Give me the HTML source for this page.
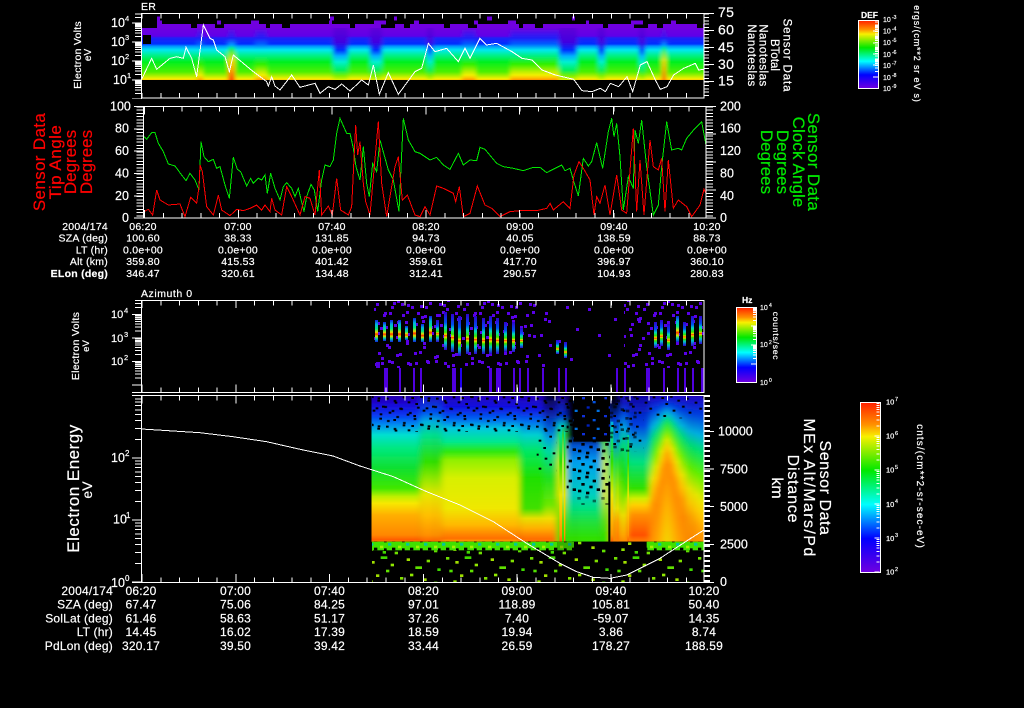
<!DOCTYPE html>
<html><head><meta charset="utf-8"><title>Sensor Data</title>
<style>
html,body{margin:0;padding:0;background:#000;width:1024px;height:708px;overflow:hidden}
svg{display:block}
text{font-family:"Liberation Sans",sans-serif;fill:#fff;stroke:#fff;stroke-width:.2}
.a{font-size:12.5px}.s{font-size:7.5px}.r{font-size:10.5px;text-anchor:middle;letter-spacing:.25px}
.l{font-size:10.5px;text-anchor:end;letter-spacing:.25px}
.R{font-size:12px;text-anchor:middle;letter-spacing:.2px}.L{font-size:12px;text-anchor:end;letter-spacing:.2px}
.m{text-anchor:middle}
.crisp{shape-rendering:crispEdges}
.rd{fill:#f00;stroke:#f00}.gr{fill:#00e800;stroke:#00e800}
</style></head><body>
<svg width="1024" height="708" viewBox="0 0 1024 708" xmlns="http://www.w3.org/2000/svg">
<defs>
<filter id="b6" x="-5%" y="0" width="110%" height="100%"><feGaussianBlur stdDeviation="9 0"/></filter>
<filter id="b1" x="-5%" y="0" width="110%" height="100%"><feGaussianBlur stdDeviation="2.2 0"/></filter>
<clipPath id="c4"><rect x="36" y="0" width="996" height="561"/></clipPath>
<clipPath id="c1"><rect x="142" y="14" width="562" height="84"/></clipPath>
<clipPath id="cl1"><rect x="125" y="13" width="20" height="86"/></clipPath>
<clipPath id="cl3"><rect x="125" y="300" width="20" height="92.5"/></clipPath>
<clipPath id="cl4"><rect x="125" y="395" width="20" height="188"/></clipPath>
<clipPath id="cb1"><rect x="858" y="20" width="21" height="69"/></clipPath>
<clipPath id="cd3"><rect x="374" y="301" width="330" height="67"/></clipPath>

<path id="d19" d="M0-5.7H7M0-9.1H7M0-11.4H7M0-13.3H7M0-14.8H7M0-16.1H7M0-17.2H7M0-18.1H7M-3 0H7" stroke="#fff" fill="none"/>
<path id="d23" d="M0-7.1H7M0-11.2H7M0-14.1H7M0-16.4H7M0-18.3H7M0-19.9H7M0-21.2H7M0-22.4H7M-3 0H7" stroke="#fff" fill="none"/>
<path id="d62" d="M0-18.7H7M0-29.6H7M0-37.3H7M0-43.3H7M0-48.2H7M0-52.4H7M0-56H7M0-59.2H7M-3 0H7" stroke="#fff" fill="none"/>
<path id="b34" d="M0-10.2H3M0-16.2H3M0-20.5H3M0-23.8H3M0-26.5H3M0-28.7H3M0-30.7H3M0-32.4H3M-2 0H3" stroke="#fff" fill="none"/>
<path id="b19" d="M0-5.7H3M0-9.1H3M0-11.4H3M0-13.3H3M0-14.8H3M0-16.1H3M0-17.2H3M0-18.1H3M-2 0H3" stroke="#fff" fill="none"/>

<linearGradient id="cb" x1="0" y1="0" x2="0" y2="1">
<stop offset="0" stop-color="#ff2000"/><stop offset=".13" stop-color="#ff9000"/><stop offset=".2" stop-color="#f8f000"/><stop offset=".4" stop-color="#00e800"/><stop offset=".6" stop-color="#00ffff"/><stop offset=".8" stop-color="#0000ff"/><stop offset="1" stop-color="#7000e0"/></linearGradient>

<linearGradient id="g1" gradientUnits="userSpaceOnUse" x1="0" y1="0" x2="0" y2="1000"><stop offset="0" stop-color="#2800a8"/><stop offset=".03" stop-color="#1808d8"/><stop offset=".06" stop-color="#0838f0"/><stop offset=".09" stop-color="#0090f0"/><stop offset=".12" stop-color="#00e0d0"/><stop offset=".16" stop-color="#00e880"/><stop offset=".22" stop-color="#10e030"/><stop offset=".28" stop-color="#40e800"/><stop offset=".305" stop-color="#c0f000"/><stop offset=".325" stop-color="#f8e800"/><stop offset=".36" stop-color="#ffb000"/><stop offset=".42" stop-color="#ff8800"/><stop offset=".435" stop-color="#ff5a00"/><stop offset=".44" stop-color="#ff9000"/></linearGradient>
<linearGradient id="g2" gradientUnits="userSpaceOnUse" x1="0" y1="0" x2="0" y2="1000"><stop offset="0" stop-color="#2010c0"/><stop offset=".05" stop-color="#0050f0"/><stop offset=".08" stop-color="#00b0e0"/><stop offset=".12" stop-color="#00e090"/><stop offset=".2" stop-color="#30e000"/><stop offset=".25" stop-color="#90e800"/><stop offset=".3" stop-color="#e8e800"/><stop offset=".36" stop-color="#ffc000"/><stop offset=".42" stop-color="#ff9000"/><stop offset=".44" stop-color="#ff6000"/></linearGradient>
<linearGradient id="g3" gradientUnits="userSpaceOnUse" x1="0" y1="0" x2="0" y2="1000"><stop offset="0" stop-color="#2800b8"/><stop offset=".035" stop-color="#1010e0"/><stop offset=".07" stop-color="#0060f0"/><stop offset=".1" stop-color="#00c8e0"/><stop offset=".14" stop-color="#00e890"/><stop offset=".17" stop-color="#30e810"/><stop offset=".195" stop-color="#90f000"/><stop offset=".25" stop-color="#d8f000"/><stop offset=".34" stop-color="#f0e800"/><stop offset=".39" stop-color="#ffb800"/><stop offset=".43" stop-color="#ff7000"/><stop offset=".44" stop-color="#ffa000"/></linearGradient>
<linearGradient id="g4" gradientUnits="userSpaceOnUse" x1="0" y1="0" x2="0" y2="1000"><stop offset="0" stop-color="#2800b8"/><stop offset=".04" stop-color="#1010e0"/><stop offset=".08" stop-color="#0070f0"/><stop offset=".12" stop-color="#00d0d0"/><stop offset=".17" stop-color="#00e860"/><stop offset=".25" stop-color="#20e000"/><stop offset=".34" stop-color="#40e000"/><stop offset=".37" stop-color="#e8e000"/><stop offset=".4" stop-color="#ffb000"/><stop offset=".43" stop-color="#ff7000"/></linearGradient>
<linearGradient id="g5" gradientUnits="userSpaceOnUse" x1="0" y1="0" x2="0" y2="1000"><stop offset="0" stop-color="#000030"/><stop offset=".04" stop-color="#101090"/><stop offset=".09" stop-color="#0050d0"/><stop offset=".13" stop-color="#00a0e0"/><stop offset=".17" stop-color="#00d8a0"/><stop offset=".25" stop-color="#20e020"/><stop offset=".33" stop-color="#70e800"/><stop offset=".37" stop-color="#f0e000"/><stop offset=".4" stop-color="#ffb000"/><stop offset=".43" stop-color="#ff7000"/></linearGradient>
<linearGradient id="g6" gradientUnits="userSpaceOnUse" x1="0" y1="0" x2="0" y2="1000"><stop offset="0" stop-color="#200090"/><stop offset=".06" stop-color="#0030d0"/><stop offset=".09" stop-color="#00c0c0"/><stop offset=".12" stop-color="#30e040"/><stop offset=".2" stop-color="#c0f000"/><stop offset=".3" stop-color="#e0e800"/><stop offset=".38" stop-color="#60e000"/><stop offset=".43" stop-color="#30e000"/></linearGradient>
<linearGradient id="g7" gradientUnits="userSpaceOnUse" x1="0" y1="0" x2="0" y2="1000"><stop offset="0" stop-color="#000"/><stop offset=".12" stop-color="#000018"/><stop offset=".15" stop-color="#0050d0"/><stop offset=".2" stop-color="#00a0f0"/><stop offset=".3" stop-color="#00d0c0"/><stop offset=".34" stop-color="#00e080"/><stop offset=".38" stop-color="#20e040"/><stop offset=".43" stop-color="#30e000"/></linearGradient>
<linearGradient id="g8" gradientUnits="userSpaceOnUse" x1="0" y1="0" x2="0" y2="1000"><stop offset=".02" stop-color="#000"/><stop offset=".07" stop-color="#0030d0"/><stop offset=".14" stop-color="#00a0d0"/><stop offset=".2" stop-color="#20e040"/><stop offset=".28" stop-color="#a0e800"/><stop offset=".34" stop-color="#e8e000"/><stop offset=".38" stop-color="#ffa000"/><stop offset=".43" stop-color="#ff8000"/></linearGradient>
<linearGradient id="g9" gradientUnits="userSpaceOnUse" x1="0" y1="0" x2="0" y2="1000"><stop offset="0" stop-color="#1000a0"/><stop offset=".09" stop-color="#0040e0"/><stop offset=".14" stop-color="#00a0d0"/><stop offset=".2" stop-color="#00e080"/><stop offset=".28" stop-color="#30e000"/><stop offset=".31" stop-color="#d0f000"/><stop offset=".33" stop-color="#ffd000"/><stop offset=".36" stop-color="#ff9000"/><stop offset=".42" stop-color="#ff5000"/><stop offset=".44" stop-color="#ff8000"/></linearGradient>
<linearGradient id="g11" gradientUnits="userSpaceOnUse" x1="0" y1="0" x2="0" y2="1000"><stop offset="0" stop-color="#2000c0"/><stop offset=".05" stop-color="#0040e0"/><stop offset=".1" stop-color="#00b0e0"/><stop offset=".14" stop-color="#00e070"/><stop offset=".2" stop-color="#60f000"/><stop offset=".26" stop-color="#e8e800"/><stop offset=".3" stop-color="#ffc800"/><stop offset=".34" stop-color="#ff9c00"/><stop offset=".4" stop-color="#ff8800"/><stop offset=".5" stop-color="#ff9c00"/><stop offset=".65" stop-color="#ffb800"/><stop offset=".85" stop-color="#f0d800"/></linearGradient>
<linearGradient id="g12" gradientUnits="userSpaceOnUse" x1="0" y1="0" x2="0" y2="1000"><stop offset="0" stop-color="#2000b8"/><stop offset=".05" stop-color="#0040e0"/><stop offset=".1" stop-color="#00b0e0"/><stop offset=".15" stop-color="#00e070"/><stop offset=".24" stop-color="#20e000"/><stop offset=".3" stop-color="#70e800"/><stop offset=".36" stop-color="#e8e800"/><stop offset=".42" stop-color="#ffb000"/><stop offset=".44" stop-color="#ff9000"/></linearGradient>

<pattern id="sp" patternUnits="userSpaceOnUse" width="150" height="84"><g fill="#000"><rect x="4" y="6" width="8" height="6"/><rect x="30" y="2" width="8" height="6"/><rect x="52" y="14" width="8" height="6"/><rect x="78" y="8" width="8" height="6"/><rect x="16" y="24" width="8" height="6"/><rect x="66" y="32" width="8" height="6"/><rect x="38" y="44" width="8" height="6"/><rect x="86" y="50" width="8" height="6"/><rect x="10" y="60" width="8" height="6"/><rect x="58" y="68" width="8" height="6"/><rect x="104" y="20" width="8" height="6"/><rect x="128" y="4" width="8" height="6"/><rect x="118" y="38" width="8" height="6"/><rect x="140" y="56" width="8" height="6"/><rect x="100" y="72" width="8" height="6"/></g></pattern>
<pattern id="sd" patternUnits="userSpaceOnUse" width="72" height="60"><g fill="#000"><rect x="4" y="6" width="10" height="8"/><rect x="28" y="2" width="10" height="8"/><rect x="50" y="14" width="10" height="8"/><rect x="16" y="24" width="10" height="8"/><rect x="40" y="32" width="10" height="8"/><rect x="62" y="40" width="10" height="8"/><rect x="6" y="44" width="10" height="8"/><rect x="30" y="50" width="10" height="8"/></g></pattern>
<pattern id="bd" patternUnits="userSpaceOnUse" width="66" height="54"><rect x="6" y="6" width="9" height="7" fill="#1030d8"/><rect x="38" y="18" width="9" height="7" fill="#0050e0"/><rect x="20" y="34" width="9" height="7" fill="#0020c0"/><rect x="50" y="44" width="9" height="7" fill="#0070e0"/></pattern>
<pattern id="gn" patternUnits="userSpaceOnUse" width="252" height="96"><rect x="6" y="6" width="10" height="8" fill="#70e000"/><rect x="34" y="18" width="10" height="8" fill="#a0e000"/><rect x="62" y="4" width="20" height="8" fill="#40d800"/><rect x="92" y="26" width="10" height="8" fill="#90e800"/><rect x="16" y="44" width="10" height="8" fill="#50e000"/><rect x="48" y="58" width="10" height="8" fill="#a0e000"/><rect x="78" y="44" width="10" height="8" fill="#60e000"/><rect x="120" y="66" width="10" height="8" fill="#80e000"/><rect x="28" y="76" width="10" height="8" fill="#90e000"/><rect x="68" y="84" width="10" height="8" fill="#40d800"/><rect x="104" y="86" width="10" height="8" fill="#70e000"/><rect x="140" y="10" width="10" height="8" fill="#a0e000"/><rect x="166" y="34" width="20" height="8" fill="#60e000"/><rect x="200" y="14" width="10" height="8" fill="#80e000"/><rect x="232" y="40" width="10" height="8" fill="#40d800"/><rect x="150" y="56" width="10" height="8" fill="#90e800"/><rect x="190" y="70" width="10" height="8" fill="#a0e000"/><rect x="222" y="80" width="10" height="8" fill="#60e000"/></pattern>
<pattern id="gb" patternUnits="userSpaceOnUse" width="54" height="26"><rect width="54" height="26" fill="#40e000"/><rect x="6" y="10" width="10" height="8" fill="#a0f000"/><rect x="30" y="2" width="10" height="8" fill="#00c8a0"/><rect x="42" y="16" width="10" height="8" fill="#000"/><rect x="18" y="18" width="8" height="8" fill="#000"/></pattern>

<pattern id="pd" patternUnits="userSpaceOnUse" x="374" y="300" width="90" height="66"><g fill="#5a00e8"><rect x="2" y="3" width="3" height="3"/><rect x="19" y="2" width="3" height="3"/><rect x="37" y="6" width="3" height="3"/><rect x="55" y="2" width="3" height="3"/><rect x="72" y="8" width="3" height="3"/><rect x="10" y="12" width="3" height="3"/><rect x="28" y="14" width="3" height="3"/><rect x="47" y="16" width="3" height="3"/><rect x="64" y="14" width="3" height="3"/><rect x="83" y="18" width="3" height="3"/><rect x="3" y="22" width="3" height="3"/><rect x="20" y="24" width="3" height="3"/><rect x="56" y="26" width="3" height="3"/><rect x="75" y="28" width="3" height="3"/><rect x="12" y="44" width="3" height="3"/><rect x="32" y="42" width="3" height="3"/><rect x="49" y="46" width="3" height="3"/><rect x="68" y="44" width="3" height="3"/><rect x="84" y="48" width="3" height="3"/><rect x="4" y="52" width="3" height="3"/><rect x="22" y="54" width="3" height="3"/><rect x="40" y="52" width="3" height="3"/><rect x="60" y="56" width="3" height="3"/><rect x="78" y="54" width="3" height="3"/><rect x="14" y="60" width="3" height="3"/><rect x="33" y="62" width="3" height="3"/><rect x="52" y="60" width="3" height="3"/><rect x="70" y="62" width="3" height="3"/></g></pattern>
<pattern id="ps" patternUnits="userSpaceOnUse" x="374" y="300" width="70" height="66"><g fill="#5a00e8"><rect x="4" y="8" width="3" height="3"/><rect x="30" y="18" width="3" height="3"/><rect x="52" y="6" width="3" height="3"/><rect x="14" y="34" width="3" height="3"/><rect x="44" y="40" width="3" height="3"/><rect x="62" y="28" width="3" height="3"/><rect x="24" y="54" width="3" height="3"/><rect x="56" y="58" width="3" height="3"/></g></pattern>
<linearGradient id="h1" x1="0" y1="0" x2="0" y2="1"><stop offset="0" stop-color="#3000d0"/><stop offset=".28" stop-color="#0050f0"/><stop offset=".4" stop-color="#00d8c0"/><stop offset=".53" stop-color="#30e800"/><stop offset=".59" stop-color="#e8e000"/><stop offset=".62" stop-color="#ff3000"/><stop offset=".66" stop-color="#e8e000"/><stop offset=".72" stop-color="#30e000"/><stop offset=".82" stop-color="#00c0d0"/><stop offset="1" stop-color="#3000d0"/></linearGradient>
<linearGradient id="h2" x1="0" y1="0" x2="0" y2="1"><stop offset="0" stop-color="#1020e0"/><stop offset=".2" stop-color="#00b0e0"/><stop offset=".4" stop-color="#00e880"/><stop offset=".56" stop-color="#e0e000"/><stop offset=".64" stop-color="#ff3000"/><stop offset=".74" stop-color="#d0e800"/><stop offset=".85" stop-color="#00d0b0"/><stop offset="1" stop-color="#1020e0"/></linearGradient>

<linearGradient id="p1" gradientUnits="userSpaceOnUse" x1="0" y1="0" x2="0" y2="100"><stop offset=".28" stop-color="#7000e0"/><stop offset=".36" stop-color="#6000e8"/><stop offset=".38" stop-color="#2020f8"/><stop offset=".44" stop-color="#0030ff"/><stop offset=".46" stop-color="#0090ff"/><stop offset=".5" stop-color="#00e8f0"/><stop offset=".55" stop-color="#00f090"/><stop offset=".62" stop-color="#00f020"/><stop offset=".72" stop-color="#50f000"/><stop offset=".76" stop-color="#b0f000"/><stop offset=".785" stop-color="#f0f000"/><stop offset=".8" stop-color="#ffd000"/></linearGradient>
<linearGradient id="p2" gradientUnits="userSpaceOnUse" x1="0" y1="0" x2="0" y2="100"><stop offset=".28" stop-color="#6000d8"/><stop offset=".42" stop-color="#4000e0"/><stop offset=".5" stop-color="#0030ff"/><stop offset=".56" stop-color="#00b0ff"/><stop offset=".62" stop-color="#00f0d0"/><stop offset=".7" stop-color="#00f060"/><stop offset=".76" stop-color="#80f000"/><stop offset=".8" stop-color="#e0f000"/></linearGradient>
<linearGradient id="p3" gradientUnits="userSpaceOnUse" x1="0" y1="0" x2="0" y2="100"><stop offset=".28" stop-color="#7000e0"/><stop offset=".38" stop-color="#2020f8"/><stop offset=".45" stop-color="#00a0ff"/><stop offset=".48" stop-color="#00f090"/><stop offset=".52" stop-color="#60f000"/><stop offset=".6" stop-color="#f0e000"/><stop offset=".7" stop-color="#ffa000"/><stop offset=".76" stop-color="#ff6000"/><stop offset=".8" stop-color="#ff3000"/></linearGradient>
<linearGradient id="p4" gradientUnits="userSpaceOnUse" x1="0" y1="0" x2="0" y2="100"><stop offset=".28" stop-color="#7000e0"/><stop offset=".38" stop-color="#2020f8"/><stop offset=".44" stop-color="#0060ff"/><stop offset=".5" stop-color="#00e8f0"/><stop offset=".56" stop-color="#00f080"/><stop offset=".64" stop-color="#30f000"/><stop offset=".71" stop-color="#b0f000"/><stop offset=".75" stop-color="#f0f000"/><stop offset=".78" stop-color="#ffc000"/><stop offset=".8" stop-color="#ff9000"/></linearGradient>
</defs>
<rect width="1024" height="708" fill="#000"/>

<!-- PANEL 1 spectrogram -->
<g clip-path="url(#c1)">
<g filter="url(#b1)">
<rect x="130" y="28" width="585" height="52" fill="url(#p1)"/>
<rect x="197" y="28" width="6" height="52" fill="url(#p4)"/>
<rect x="228" y="28" width="7" height="52" fill="url(#p3)"/>
<rect x="255" y="28" width="12" height="52" fill="url(#p4)"/>
<rect x="333" y="28" width="15" height="52" fill="url(#p2)"/>
<rect x="370" y="28" width="12" height="52" fill="url(#p2)"/>
<rect x="427" y="28" width="6" height="52" fill="url(#p2)"/>
<rect x="462" y="28" width="14" height="52" fill="url(#p4)"/>
<rect x="510" y="28" width="50" height="52" fill="url(#p4)"/>
<rect x="559" y="28" width="18" height="52" fill="url(#p2)"/>
<rect x="598" y="28" width="7" height="52" fill="url(#p2)"/>
<rect x="639" y="28" width="6" height="52" fill="url(#p2)"/>
<rect x="662" y="28" width="4" height="52" fill="url(#p3)"/>
</g>
<rect x="142" y="28" width="15" height="17" fill="url(#sp)" opacity=".9"/>
<rect x="143" y="35" width="8" height="9" fill="#000"/>
<g class="crisp" fill="none" stroke="#7000e0">
<line x1="157" x2="704" y1="26" y2="26" stroke-width="4" stroke-dasharray="34 6 18 9 42 4 12 8 60 5 26 14 9 6"/>
<line x1="157" x2="704" y1="22.5" y2="22.5" stroke-width="4" stroke-dasharray="5 55 4 30 8 70 3 42 12 28"/>
<line x1="157" x2="704" y1="18.5" y2="18.5" stroke-width="4" stroke-dasharray="3 170 4 60 3 90 5 80"/>
</g>
<polyline class="crisp" transform="scale(.33333)" fill="none" stroke="#fff" stroke-width="3" points="425,238 455,175 470,208 510,175 530,170 550,175 558,142 575,175 590,230 610,75 630,115 640,120 650,150 675,170 688,215 700,165 730,190 760,215 800,245 805,258 815,230 825,258 840,270 875,225 900,262 945,250 960,280 985,260 1005,268 1025,252 1050,273 1085,240 1105,255 1120,195 1138,283 1165,218 1195,283 1245,215 1265,205 1285,130 1305,155 1340,145 1375,185 1395,145 1410,175 1440,115 1460,135 1490,130 1536,155 1566,175 1596,180 1626,210 1666,225 1721,238 1746,272 1776,275 1801,265 1816,275 1831,250 1856,260 1881,230 1898,275 1921,195 1941,185 1966,240 1981,268 2001,260 2021,225 2051,205 2086,190 2096,210 2112,208"/>
</g>
<g class="crisp" fill="none" stroke="#fff">
<rect x="141.5" y="13.5" width="562.5" height="84.5"/>
<line x1="141.5" x2="704" y1="16" y2="16" stroke-width="5" stroke-dasharray="1 17.77"/>
<line x1="141.5" x2="704" y1="95.5" y2="95.5" stroke-width="5" stroke-dasharray="1 17.77"/>
<line x1="706.5" x2="706.5" y1="13.5" y2="98" stroke-width="5" stroke-dasharray="1 2.4"/>
<path d="M704 13.5H714M704 30.5H714M704 47.5H714M704 64.5H714M704 81.5H714"/>
<g clip-path="url(#cl1)">
<use href="#d19" x="135" y="99"/><use href="#d19" x="135" y="80"/><use href="#d19" x="135" y="61"/><use href="#d19" x="135" y="42"/><use href="#d19" x="135" y="23"/>
</g>
</g>
<text x="141" y="10" font-size="10.5" letter-spacing=".3">ER</text>
<g class="a"><text x="111" y="27">10</text><text x="111" y="46">10</text><text x="111" y="65">10</text><text x="113" y="84">10</text></g>
<g class="s"><text x="125" y="21">4</text><text x="125" y="40">3</text><text x="125" y="59">2</text><text x="127" y="78">1</text></g>
<g font-size="14"><text x="718" y="17" letter-spacing=".3">75</text><text x="718" y="34.5" letter-spacing=".3">60</text><text x="718" y="52" letter-spacing=".3">45</text><text x="718" y="69" letter-spacing=".3">30</text><text x="718" y="85.5" letter-spacing=".3">15</text></g>
<text transform="translate(81,55) rotate(-90)" class="m" font-size="10.5" letter-spacing=".25">Electron Volts</text>
<text transform="translate(91,55) rotate(-90)" class="m" font-size="10">eV</text>
<g font-size="11.5" class="m">
<text transform="translate(783.5,55.5) rotate(90)" letter-spacing=".9">Sensor Data</text>
<text transform="translate(771,55) rotate(90)">BTotal</text>
<text transform="translate(759.5,55.5) rotate(90)" letter-spacing=".5">Nanoteslas</text>
<text transform="translate(748,55.5) rotate(90)" letter-spacing=".5">Nanoteslas</text>
</g>
<!-- top colorbar -->
<rect class="crisp" x="858.5" y="20.5" width="20" height="68" fill="url(#cb)" stroke="#fff"/>
<g class="crisp" clip-path="url(#cb1)"><use href="#b19" x="875" y="31"/><use href="#b19" x="875" y="43"/><use href="#b19" x="875" y="54"/><use href="#b19" x="875" y="65"/><use href="#b19" x="875" y="77"/></g>
<text x="861" y="18" font-size="8.5" font-weight="bold">DEF</text>
<g font-size="7"><text x="883" y="22">10</text><text x="883" y="33.5">10</text><text x="883" y="45">10</text><text x="883" y="57">10</text><text x="883" y="68">10</text><text x="883" y="80">10</text><text x="883" y="91">10</text></g>
<g font-size="5"><text x="892" y="19">-3</text><text x="892" y="30.5">-4</text><text x="892" y="42">-5</text><text x="892" y="54">-6</text><text x="892" y="65">-7</text><text x="892" y="77">-8</text><text x="892" y="88">-9</text></g>
<text transform="translate(914,54) rotate(90)" class="m" font-size="9" letter-spacing=".85">ergs/(cm**2 sr eV s)</text>

<!-- PANEL 2 -->
<g transform="translate(0,100) scale(.33333)" fill="none" stroke-width="3" class="crisp">
<polyline stroke="#00e800" points="432,110 440,118 455,98 465,98 475,130 490,155 505,192 525,198 545,225 558,242 570,220 585,240 597,270 603,125 612,170 625,185 640,178 650,205 660,200 675,255 688,295 700,172 712,208 722,215 740,258 752,235 760,250 775,235 785,240 795,225 802,280 812,220 825,265 840,300 850,260 860,248 875,265 885,290 895,265 912,335 920,290 933,253 943,270 953,335 965,240 975,195 990,200 1000,180 1010,100 1020,55 1040,100 1050,100 1060,145 1068,200 1080,240 1090,140 1100,250 1108,290 1118,190 1130,215 1140,120 1165,210 1180,240 1197,335 1210,55 1225,120 1245,155 1260,160 1275,170 1290,180 1310,172 1330,195 1350,208 1375,160 1390,195 1410,180 1430,182 1440,142 1455,148 1490,190 1510,200 1540,205 1570,212 1600,202 1620,202 1640,218 1665,205 1685,195 1695,212 1710,205 1720,240 1735,288 1750,175 1765,198 1775,185 1790,128 1808,205 1825,95 1835,55 1842,110 1850,70 1860,170 1870,330 1885,230 1900,265 1905,90 1915,130 1925,60 1940,200 1960,345 1975,315 1985,200 2000,65 2015,150 2035,145 2045,150 2060,115 2085,85 2105,65 2118,135"/>
<polyline stroke="#ff0000" points="432,335 445,328 458,345 470,270 480,300 505,315 540,312 555,350 572,292 590,310 597,260 600,195 607,215 620,320 640,345 655,285 665,330 690,347 710,328 730,332 750,325 770,315 785,330 795,315 810,335 815,295 825,330 845,345 860,260 875,290 900,345 915,290 930,295 945,345 958,210 965,345 985,318 997,345 1010,235 1022,330 1045,345 1055,320 1067,75 1073,165 1080,125 1090,250 1097,305 1110,345 1135,65 1145,250 1160,350 1185,200 1195,170 1207,300 1222,285 1245,345 1260,350 1275,320 1290,345 1310,258 1330,265 1360,280 1367,305 1378,260 1390,350 1410,340 1432,258 1455,315 1475,325 1500,350 1530,335 1560,332 1610,332 1640,325 1650,310 1660,330 1690,305 1710,325 1722,225 1737,185 1750,205 1770,240 1782,345 1790,290 1800,310 1815,255 1830,345 1850,225 1865,330 1880,340 1900,85 1910,335 1920,180 1932,345 1950,120 1960,200 1975,210 1985,175 1995,335 2005,180 2020,325 2035,300 2060,320 2075,350 2100,315 2112,268 2118,280"/>
</g>
<g class="crisp" fill="none" stroke="#fff">
<rect x="143.5" y="106.5" width="562.5" height="111.5"/>
<line x1="144" x2="706" y1="109" y2="109" stroke-width="5" stroke-dasharray="1 17.77"/>
<line x1="144" x2="706" y1="215.5" y2="215.5" stroke-width="5" stroke-dasharray="1 17.77"/>
<line x1="144" x2="706" y1="214" y2="214" stroke-width="8" stroke-dasharray="1 92.8"/>
<line x1="144" x2="706" y1="110.5" y2="110.5" stroke-width="8" stroke-dasharray="1 92.8"/>
<line x1="140" x2="140" y1="106.5" y2="218" stroke-width="7" stroke-dasharray="1 2.2"/>
<line x1="709.5" x2="709.5" y1="106.5" y2="218" stroke-width="7" stroke-dasharray="1 2.2"/>
<path d="M134 106.5H143M134 129H143M134 151H143M134 173.5H143M134 196H143M134 218H143M706 106.5H716M706 134H716M706 162H716M706 190H716M706 218H716"/>
</g>
<g class="a"><text x="110" y="110.5">100</text><text x="115" y="132.5">80</text><text x="115" y="155">60</text><text x="115" y="177.5">40</text><text x="115" y="200">20</text><text x="122" y="222">0</text>
<text x="720" y="110.5">200</text><text x="720" y="132.5">160</text><text x="720" y="155">120</text><text x="720" y="177.5">80</text><text x="720" y="200">40</text><text x="720" y="222">0</text></g>
<g font-size="17" class="m">
<text transform="translate(45,162) rotate(-90)" class="rd" letter-spacing=".35">Sensor Data</text>
<text transform="translate(61,162) rotate(-90)" class="rd" letter-spacing=".5">Tip Angle</text>
<text transform="translate(76,162) rotate(-90)" class="rd">Degrees</text>
<text transform="translate(92,162) rotate(-90)" class="rd">Degrees</text>
</g>
<g font-size="17" class="m">
<text transform="translate(808,162) rotate(90)" class="gr" letter-spacing=".35">Sensor Data</text>
<text transform="translate(793,162) rotate(90)" class="gr" letter-spacing=".1">Clock Angle</text>
<text transform="translate(777,162) rotate(90)" class="gr">Degrees</text>
<text transform="translate(761,162) rotate(90)" class="gr">Degrees</text>
</g>
<g class="l"><text x="108" y="230">2004/174</text><text x="108" y="241.5">SZA (deg)</text><text x="108" y="253.5">LT (hr)</text><text x="108" y="265">Alt (km)</text><text x="108" y="277" font-weight="bold">ELon (deg)</text></g>
<g class="r">
<text x="143" y="230">06:20</text><text x="238" y="230">07:00</text><text x="332" y="230">07:40</text><text x="426" y="230">08:20</text><text x="520" y="230">09:00</text><text x="614" y="230">09:40</text><text x="707" y="230">10:20</text>
<text x="143" y="241.5">100.60</text><text x="238" y="241.5">38.33</text><text x="332" y="241.5">131.85</text><text x="426" y="241.5">94.73</text><text x="520" y="241.5">40.05</text><text x="614" y="241.5">138.59</text><text x="707" y="241.5">88.73</text>
<text x="143" y="253.5">0.0e+00</text><text x="238" y="253.5">0.0e+00</text><text x="332" y="253.5">0.0e+00</text><text x="426" y="253.5">0.0e+00</text><text x="520" y="253.5">0.0e+00</text><text x="614" y="253.5">0.0e+00</text><text x="707" y="253.5">0.0e+00</text>
<text x="143" y="265">359.80</text><text x="238" y="265">415.53</text><text x="332" y="265">401.42</text><text x="426" y="265">359.61</text><text x="520" y="265">417.70</text><text x="614" y="265">396.97</text><text x="707" y="265">360.10</text>
<text x="143" y="277">346.47</text><text x="238" y="277">320.61</text><text x="332" y="277">134.48</text><text x="426" y="277">312.41</text><text x="520" y="277">290.57</text><text x="614" y="277">104.93</text><text x="707" y="277">280.83</text>
</g>

<!-- PANEL 3 -->
<g clip-path="url(#cd3)" class="crisp">
<rect x="374" y="301" width="150" height="67" fill="url(#pd)"/>
<rect x="361" y="292" width="163" height="76" fill="url(#pd)" transform="translate(13,9)"/>
<rect x="345" y="283" width="179" height="85" fill="url(#pd)" transform="translate(29,18)"/>
<rect x="524" y="301" width="100" height="67" fill="url(#ps)"/>
<rect x="624" y="301" width="80" height="67" fill="url(#pd)"/>
<rect x="611" y="292" width="93" height="76" fill="url(#pd)" transform="translate(13,9)"/>
<rect x="595" y="283" width="109" height="85" fill="url(#pd)" transform="translate(29,18)"/>
</g>
<g class="crisp">
<rect x="375" y="320" width="3" height="22" fill="url(#h2)"/><rect x="383" y="322" width="3" height="19" fill="url(#h2)"/><rect x="390" y="320" width="3" height="22" fill="url(#h2)"/><rect x="398" y="320" width="3" height="22" fill="url(#h2)"/><rect x="405" y="326" width="3" height="14" fill="url(#h2)"/><rect x="413" y="318" width="3" height="24" fill="url(#h2)"/><rect x="421" y="324" width="3" height="18" fill="url(#h2)"/><rect x="429" y="316" width="3" height="26" fill="url(#h2)"/><rect x="436" y="320" width="3" height="22" fill="url(#h1)"/>
<rect x="444" y="312" width="3" height="38" fill="url(#h1)"/><rect x="451" y="314" width="3" height="38" fill="url(#h1)"/><rect x="458" y="316" width="3" height="40" fill="url(#h1)"/><rect x="466" y="314" width="3" height="40" fill="url(#h1)"/><rect x="474" y="316" width="3" height="38" fill="url(#h1)"/><rect x="482" y="318" width="3" height="36" fill="url(#h1)"/><rect x="489" y="316" width="3" height="38" fill="url(#h1)"/><rect x="496" y="318" width="3" height="36" fill="url(#h1)"/><rect x="504" y="322" width="3" height="30" fill="url(#h1)"/><rect x="512" y="322" width="3" height="30" fill="url(#h1)"/><rect x="520" y="328" width="3" height="20" fill="url(#h1)"/>
<rect x="556" y="340" width="3" height="14" fill="url(#h1)"/><rect x="564" y="342" width="3" height="16" fill="url(#h1)"/>
<rect x="654" y="322" width="3" height="26" fill="url(#h1)"/><rect x="660" y="320" width="3" height="26" fill="url(#h1)"/><rect x="667" y="324" width="3" height="26" fill="url(#h1)"/><rect x="676" y="316" width="3" height="26" fill="url(#h2)"/><rect x="683" y="322" width="3" height="24" fill="url(#h1)"/><rect x="691" y="316" width="3" height="30" fill="url(#h1)"/><rect x="699" y="316" width="3" height="28" fill="url(#h1)"/>
<g fill="#5000e0"><rect x="376" y="362" width="4" height="6"/><rect x="384" y="368" width="4" height="24"/><rect x="399" y="368" width="2" height="24"/><rect x="413" y="368" width="2" height="24"/><rect x="420" y="368" width="2" height="24"/><rect x="452" y="368" width="4" height="24"/><rect x="460" y="368" width="2" height="24" fill="#2000f0"/><rect x="489" y="368" width="3" height="24"/><rect x="496" y="368" width="5" height="24"/><rect x="513" y="368" width="2" height="24"/><rect x="519" y="368" width="2" height="24"/><rect x="527" y="368" width="2" height="24"/><rect x="542" y="368" width="2" height="24"/><rect x="558" y="368" width="2" height="24"/><rect x="565" y="368" width="2" height="24"/><rect x="616" y="368" width="2" height="24"/><rect x="624" y="368" width="2" height="24"/><rect x="646" y="368" width="4" height="24"/><rect x="663" y="368" width="2" height="24"/><rect x="677" y="368" width="2" height="24"/><rect x="684" y="368" width="2" height="24"/><rect x="692" y="368" width="2" height="24"/><rect x="701" y="368" width="3" height="24"/></g>
</g>
<g class="crisp" fill="none" stroke="#fff">
<rect x="141.5" y="300.5" width="562.5" height="92"/>
<line x1="141.5" x2="704" y1="303" y2="303" stroke-width="5" stroke-dasharray="1 17.77"/>
<line x1="141.5" x2="704" y1="304" y2="304" stroke-width="8" stroke-dasharray="1 92.8"/>
<line x1="141.5" x2="704" y1="390" y2="390" stroke-width="5" stroke-dasharray="1 17.77"/>
<line x1="141.5" x2="704" y1="388.5" y2="388.5" stroke-width="8" stroke-dasharray="1 92.8"/>
<g clip-path="url(#cl3)"><use href="#d23" x="135" y="385"/><use href="#d23" x="135" y="361.5"/><use href="#d23" x="135" y="338"/><use href="#d23" x="135" y="314.5"/></g>
<line x1="132" x2="141" y1="392.5" y2="392.5"/>
</g>
<text x="141" y="297" font-size="10.5" letter-spacing=".55">Azimuth 0</text>
<g font-size="11"><text x="111" y="318">10</text><text x="111" y="342">10</text><text x="111" y="365">10</text></g>
<g class="s"><text x="124" y="313">4</text><text x="124" y="337">3</text><text x="124" y="360">2</text></g>
<text transform="translate(79,346) rotate(-90)" class="m" font-size="10.5" letter-spacing=".3">Electron Volts</text>
<text transform="translate(89,346) rotate(-90)" class="m" font-size="9.5">eV</text>
<!-- mid colorbar -->
<rect class="crisp" x="736.5" y="307.5" width="20" height="75" fill="url(#cb)" stroke="#fff"/>
<g class="crisp"><use href="#b19" x="753" y="345"/><use href="#b19" x="753" y="326"/><use href="#b19" x="753" y="364"/></g>
<text x="742" y="303" font-size="8.5" font-weight="bold">Hz</text>
<g font-size="7"><text x="760" y="310">10</text><text x="760" y="347">10</text><text x="760" y="385">10</text></g>
<g font-size="5"><text x="769" y="307">4</text><text x="769" y="344">2</text><text x="769" y="382">0</text></g>
<text transform="translate(773,336) rotate(90)" class="m" font-size="8.5" letter-spacing=".8">counts/sec</text>

<!-- PANEL 4 -->
<g transform="translate(360,395) scale(.33333)">
<g clip-path="url(#c4)">
<g filter="url(#b6)">
<rect x="-20" y="0" width="200" height="440" fill="url(#g1)"/>
<rect x="180" y="0" width="45" height="440" fill="url(#g2)"/>
<rect x="225" y="0" width="20" height="440" fill="url(#g2)"/>
<rect x="245" y="0" width="235" height="440" fill="url(#g3)"/>
<rect x="480" y="0" width="70" height="440" fill="url(#g4)"/>
<rect x="550" y="0" width="40" height="440" fill="url(#g5)"/>
<rect x="590" y="0" width="30" height="440" fill="url(#g6)"/>
<rect x="620" y="0" width="25" height="440" fill="url(#g7)"/>
<rect x="645" y="0" width="80" height="440" fill="url(#g7)"/>
<rect x="725" y="0" width="20" height="440" fill="url(#g6)"/>
<rect x="745" y="0" width="5" height="440" fill="url(#g7)"/>
<rect x="750" y="0" width="30" height="440" fill="url(#g8)"/>
<rect x="780" y="0" width="22" height="440" fill="url(#g12)"/>
<rect x="802" y="0" width="66" height="440" fill="url(#g9)"/>
<g fill="url(#g11)">
<rect transform="translate(868,0) scale(1,.96)" width="15" height="600"/>
<rect transform="translate(883,0) scale(1,.83)" width="15" height="600"/>
<rect transform="translate(898,0) scale(1,.65)" width="15" height="700"/>
<rect transform="translate(913,0) scale(1,.52)" width="15" height="900"/>
<rect transform="translate(928,0) scale(1,.62)" width="15" height="750"/>
<rect transform="translate(943,0) scale(1,.77)" width="15" height="600"/>
<rect transform="translate(958,0) scale(1,.92)" width="20" height="500"/>
<rect transform="translate(978,0) scale(1,1.08)" width="20" height="420"/>
<rect transform="translate(998,0) scale(1,1.15)" width="20" height="400"/>
<rect transform="translate(1018,0) scale(1,1.23)" width="40" height="370"/>
</g>
</g>
<rect x="598" y="90" width="8" height="350" fill="url(#g2)"/>
<rect x="612" y="110" width="4" height="330" fill="url(#g2)"/>
<rect x="752" y="80" width="8" height="360" fill="url(#g2)"/>
<rect x="770" y="90" width="6" height="350" fill="url(#g8)"/>
<rect x="802" y="120" width="5" height="320" fill="url(#g2)"/>
<rect x="745" y="260" width="6" height="180" fill="#000"/>
<rect x="36" y="0" width="604" height="110" fill="url(#sp)"/>
<rect x="-7" y="-31" width="647" height="110" fill="url(#sp)" transform="translate(43,31)"/>
<rect x="530" y="100" width="60" height="130" fill="url(#sp)"/>
<rect x="620" y="0" width="130" height="300" fill="url(#sd)"/>
<rect x="640" y="0" width="110" height="140" fill="#000"/>
<rect x="640" y="0" width="110" height="140" fill="url(#bd)"/>
<rect x="750" y="0" width="100" height="170" fill="url(#sp)"/>
<rect x="730" y="0" width="100" height="170" fill="url(#sd)" opacity=".6"/>
<rect x="850" y="0" width="182" height="70" fill="url(#sp)"/>
<rect x="640" y="300" width="110" height="30" fill="url(#sd)" opacity=".5"/>
<rect x="36" y="440" width="1000" height="121" fill="#000"/>
<rect x="36" y="440" width="556" height="26" fill="url(#gb)"/>
<rect x="592" y="440" width="50" height="26" fill="url(#gb)" opacity=".8"/>
<rect x="860" y="440" width="172" height="26" fill="url(#gb)"/>
<rect x="36" y="466" width="996" height="95" fill="url(#gn)"/>
<rect x="640" y="440" width="220" height="30" fill="url(#gn)"/>
</g>
<polyline class="crisp" fill="none" stroke="#fff" stroke-width="3" points="0,213 100,245 200,290 300,330 400,380 500,445 600,505 650,530 700,547 750,550 800,540 900,490 1000,425 1032,405"/>
</g>
<polyline class="crisp" fill="none" stroke="#fff" points="141.5,429 200,432.7 233,436.7 266.7,441.7 300,449.3 333,456 360,466"/>
<g class="crisp" fill="none" stroke="#fff">
<rect x="141.5" y="395.5" width="562.5" height="187"/>
<line x1="141.5" x2="704" y1="398" y2="398" stroke-width="5" stroke-dasharray="1 17.77"/>
<line x1="141.5" x2="704" y1="399.5" y2="399.5" stroke-width="8" stroke-dasharray="1 92.8"/>
<line x1="141.5" x2="704" y1="580" y2="580" stroke-width="5" stroke-dasharray="1 17.77"/>
<line x1="141.5" x2="704" y1="578" y2="578" stroke-width="8" stroke-dasharray="1 92.8"/>
<g clip-path="url(#cl4)"><use href="#d62" x="135" y="582"/><use href="#d62" x="135" y="520"/><use href="#d62" x="135" y="458"/></g>
<line x1="132" x2="141" y1="395.5" y2="395.5"/>
<line x1="132" x2="141" y1="582.5" y2="582.5"/>
<line x1="707" x2="707" y1="395" y2="582" stroke-width="6" stroke-dasharray="2 3"/>
<path d="M704 431.5H714M704 469H714M704 506.5H714M704 544.5H714M704 582.5H714"/>
</g>
<g font-size="12.5"><text x="111" y="462">10</text><text x="113" y="523.5">10</text><text x="111" y="587">10</text>
<text x="718" y="435.5">10000</text><text x="720" y="473.5">7500</text><text x="720" y="511">5000</text><text x="720" y="548.5">2500</text><text x="720" y="586">0</text></g>
<g font-size="8"><text x="125" y="456">2</text><text x="126" y="518">1</text><text x="125" y="581">0</text></g>
<text transform="translate(79,488.5) rotate(-90)" class="m" font-size="17" letter-spacing=".5">Electron Energy</text>
<text transform="translate(92,490) rotate(-90)" class="m" font-size="14">eV</text>
<g font-size="16" class="m">
<text transform="translate(820,488) rotate(90)" letter-spacing=".55">Sensor Data</text>
<text transform="translate(804,488) rotate(90)" letter-spacing="1.4">MEx Alt/Mars/Pd</text>
<text transform="translate(788,489) rotate(90)" letter-spacing=".8">Distance</text>
<text transform="translate(772,488) rotate(90)">km</text>
</g>
<!-- bottom colorbar -->
<rect class="crisp" x="860.5" y="402.5" width="20" height="170" fill="url(#cb)" stroke="#fff"/>
<g class="crisp"><use href="#b34" x="876.5" y="436"/><use href="#b34" x="876.5" y="470"/><use href="#b34" x="876.5" y="504"/><use href="#b34" x="876.5" y="538"/><use href="#b34" x="876.5" y="572"/></g>
<g font-size="7.5"><text x="886" y="404.5">10</text><text x="886" y="438.5">10</text><text x="886" y="472.5">10</text><text x="886" y="507">10</text><text x="886" y="541">10</text><text x="886" y="574.5">10</text></g>
<g font-size="5.5"><text x="895" y="401">7</text><text x="895" y="435">6</text><text x="895" y="469">5</text><text x="895" y="503">4</text><text x="895" y="537">3</text><text x="895" y="571">2</text></g>
<text transform="translate(917,486.5) rotate(90)" class="m" font-size="10" letter-spacing="1.1">cnts/(cm**2-sr-sec-eV)</text>

<g class="L"><text x="113" y="595">2004/174</text><text x="113" y="608.5">SZA (deg)</text><text x="113" y="622.5">SolLat (deg)</text><text x="113" y="636">LT (hr)</text><text x="113" y="650">PdLon (deg)</text></g>
<g class="R">
<text x="141" y="595">06:20</text><text x="235.5" y="595">07:00</text><text x="329.5" y="595">07:40</text><text x="423.5" y="595">08:20</text><text x="517" y="595">09:00</text><text x="611" y="595">09:40</text><text x="704" y="595">10:20</text>
<text x="141" y="608.5">67.47</text><text x="235.5" y="608.5">75.06</text><text x="329.5" y="608.5">84.25</text><text x="423.5" y="608.5">97.01</text><text x="517" y="608.5">118.89</text><text x="611" y="608.5">105.81</text><text x="704" y="608.5">50.40</text>
<text x="141" y="622.5">61.46</text><text x="235.5" y="622.5">58.63</text><text x="329.5" y="622.5">51.17</text><text x="423.5" y="622.5">37.26</text><text x="517" y="622.5">7.40</text><text x="611" y="622.5">-59.07</text><text x="704" y="622.5">14.35</text>
<text x="141" y="636">14.45</text><text x="235.5" y="636">16.02</text><text x="329.5" y="636">17.39</text><text x="423.5" y="636">18.59</text><text x="517" y="636">19.94</text><text x="611" y="636">3.86</text><text x="704" y="636">8.74</text>
<text x="141" y="650">320.17</text><text x="235.5" y="650">39.50</text><text x="329.5" y="650">39.42</text><text x="423.5" y="650">33.44</text><text x="517" y="650">26.59</text><text x="611" y="650">178.27</text><text x="704" y="650">188.59</text>
</g>
</svg>
</body></html>
